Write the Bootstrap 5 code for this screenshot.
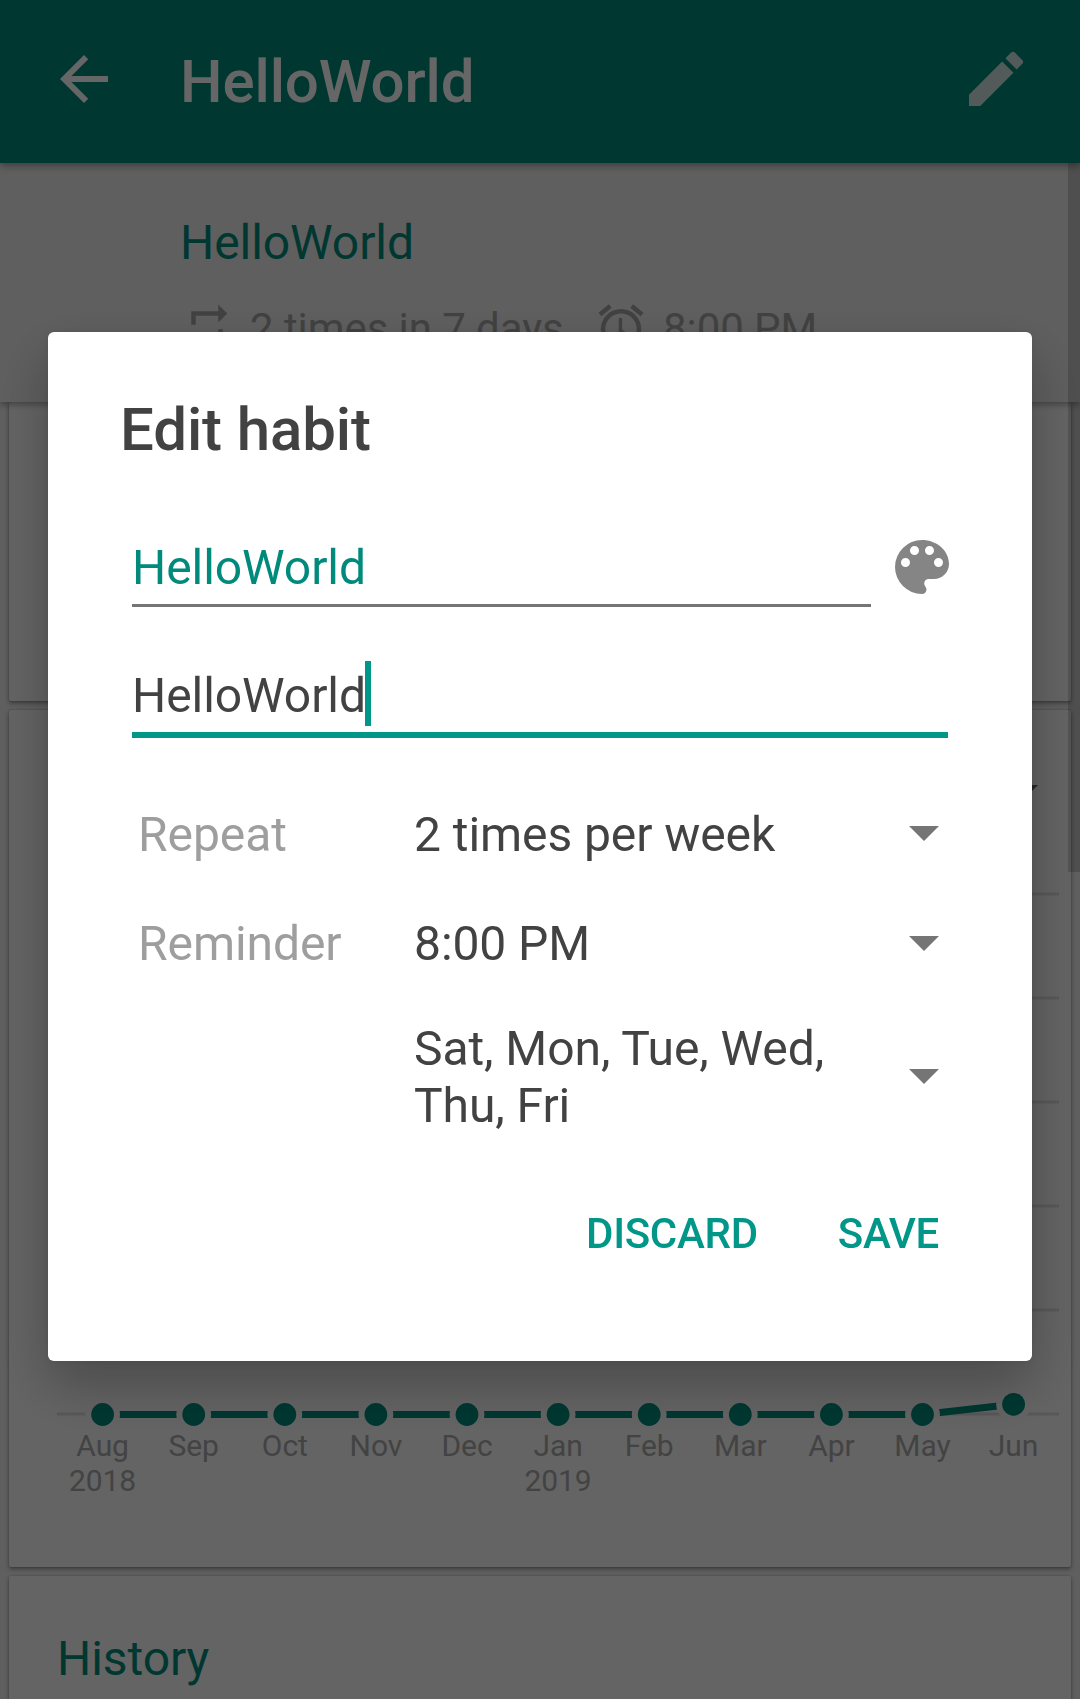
<!DOCTYPE html>
<html lang="en">
<head>
<meta charset="utf-8">
<meta name="viewport" content="width=device-width, initial-scale=1">
<title>Edit habit</title>
<link href="https://cdn.jsdelivr.net/npm/bootstrap@5.3.0/dist/css/bootstrap.min.css" rel="stylesheet">
<style>
  :root { --teal: #008a7b; --accent: #009688; --ink: #424242; }
  html, body { height: 1699px; overflow: hidden; }
  body { font-family: Roboto, "Liberation Sans", sans-serif; background: #ededed; color: var(--ink); font-size: 48px; line-height: 56px; letter-spacing: -.07px; }
  svg { display: block; flex: none; }
  .app-bar { height: 163px; padding: 43px 48px 0; background: var(--teal); color: #fff; position: relative; z-index: 3; box-shadow: 0 3px 7px rgba(0,0,0,.35); }
  .bar-title { font-size: 60px; line-height: 72px; font-weight: 500; margin: 3px 0 0 60px; letter-spacing: -.12px; }
  .habit-head { height: 239px; padding: 52px 0 0 180px; background: #ededed; position: relative; z-index: 2; box-shadow: 0 3px 6px rgba(0,0,0,.3); }
  .habit-name { color: var(--teal); }
  .habit-meta { width: 483px; font-size: 42px; line-height: 54px; color: #a4a4a4; margin-top: 29px; }
  .meta-text { padding-top: 2px; }
  .meta-time { margin-left: 15px; width: 0; white-space: nowrap; }
  .panel { background: #fafafa; border: 0; border-radius: 2px; margin: 0 9px 9px; box-shadow: 0 2px 4px rgba(0,0,0,.38), 0 0 2px rgba(0,0,0,.2); }
  .panel-overview { height: 299px; }
  .panel-score { height: 857px; }
  .panel-history { height: 170px; padding: 55px 48px; color: var(--teal); }
  .score-top { padding: 75px 33px 0 0; height: 170px; }
  .scroll-thumb { position: absolute; right: 0; top: 163px; width: 12px; height: 709px; background: rgba(0,0,0,.17); z-index: 2; }
  .chart-label { font-size: 30px; fill: #a8a8a8; text-anchor: middle; }
  .modal-backdrop { --bs-backdrop-opacity: .6; width: 100%; height: 1699px; }
  .modal-dialog { max-width: 984px; margin: 332px auto 0; }
  .modal-content { height: 1029px; border: 0; border-radius: 6px; background: #fff; color: var(--ink); padding: 62px 72px 0; box-shadow: 0 24px 54px rgba(0,0,0,.27), 0 0 8px rgba(0,0,0,.08); }
  .dialog-title { font-size: 60px; line-height: 72px; font-weight: 500; margin: 0 0 65px; letter-spacing: -.12px; }
  .field-row { margin: 0 2px 52px 12px; }
  .field { border-bottom: 3px solid #757575; padding: 9px 0 8px; }
  .name-field { width: 739px; margin-right: 15px; color: var(--teal); }
  .focus-field { width: 816px; margin-left: 12px; border-bottom: 6px solid var(--accent); margin-bottom: 69px; }
  .caret { width: 6px; height: 65px; background: var(--accent); margin: -7px 0 -2px -1px; }
  .opt { margin: 0 21px 0 18px; }
  .opt-label { width: 276px; color: #9e9e9e; }
  .opt-repeat { margin-bottom: 53px; }
  .opt-repeat svg { margin-top: -3px; }
  .opt-time { margin-bottom: 48px; }
  .opt-time svg, .opt-days svg { margin-top: -2px; }
  .opt-days { line-height: 57px; }
  .actions { margin: 75px 21px 0 0; gap: 80px; }
  .act { font-size: 42px; line-height: 50px; font-weight: 500; color: var(--accent); padding: 0; border: 0; border-radius: 0; letter-spacing: -.3px; }
</style>
</head>
<body>
<header class="app-bar d-flex align-items-start">
  <svg width="72" height="72" viewBox="0 0 24 24" fill="#fff"><path d="M20 11H7.83l5.59-5.59L12 4l-8 8 8 8 1.41-1.41L7.83 13H20v-2z"/></svg>
  <h1 class="bar-title">HelloWorld</h1>
  <svg class="ms-auto" width="72" height="72" viewBox="0 0 24 24" fill="#cce3e0"><path d="M3 17.25V21h3.75L17.81 9.94l-3.75-3.75L3 17.25zM20.71 7.04a1 1 0 0 0 0-1.41l-2.34-2.34a1 1 0 0 0-1.41 0l-1.83 1.83 3.75 3.75 1.83-1.83z"/></svg>
</header>

<section class="habit-head">
  <div class="habit-name">HelloWorld</div>
  <div class="habit-meta d-flex">
    <svg width="54" height="54" viewBox="0 0 24 24" fill="currentColor"><path d="M7 7h10v3l4-4-4-4v3H5v6h2V7zm10 10H7v-3l-4 4 4 4v-3h12v-6h-2v4z"/></svg>
    <span class="meta-text ms-3">2 times in 7 days</span>
    <svg class="ms-auto" width="54" height="54" viewBox="0 0 24 24" fill="currentColor"><path d="M22 5.72l-4.6-3.86-1.29 1.53 4.6 3.86L22 5.72zM7.88 3.39L6.6 1.86 2 5.71l1.29 1.53 4.59-3.85zM12.5 8H11v6l4.75 2.85.75-1.23-4-2.37V8zM12 4a9 9 0 1 0 0 18 9 9 0 0 0 0-18zm0 16a7 7 0 1 1 0-14 7 7 0 0 1 0 14z"/></svg>
    <span class="meta-text meta-time">8:00 PM</span>
  </div>
</section>

<main>
  <section class="card panel panel-overview"></section>
  <section class="card panel panel-score">
    <div class="score-top d-flex justify-content-end"><svg width="30" height="15" viewBox="0 0 30 15" fill="#606060"><path d="M0 0h30L15 15z"/></svg></div>
    <svg id="chart" width="1062" height="640" viewBox="9 880 1062 640"></svg>
  </section>
  <section class="card panel panel-history">History</section>
</main>
<div class="scroll-thumb"></div>

<div class="modal-backdrop show"></div>
<div class="modal d-block overflow-hidden" tabindex="-1" role="dialog">
  <div class="modal-dialog">
    <div class="modal-content">
      <h2 class="dialog-title">Edit habit</h2>
      <div class="field-row d-flex align-items-start">
        <div class="field name-field">HelloWorld</div>
        <svg width="72" height="72" viewBox="0 0 24 24" fill="#858585"><path d="M12 3a9 9 0 0 0 0 18c.83 0 1.5-.67 1.5-1.5 0-.39-.15-.74-.39-1.01-.23-.26-.38-.61-.38-.99 0-.83.67-1.5 1.5-1.5H16c2.76 0 5-2.24 5-5 0-4.42-4.03-8-9-8zm-5.5 9a1.5 1.5 0 1 1 0-3 1.5 1.5 0 0 1 0 3zm3-4a1.5 1.5 0 1 1 0-3 1.5 1.5 0 0 1 0 3zm5 0a1.5 1.5 0 1 1 0-3 1.5 1.5 0 0 1 0 3zm3 4a1.5 1.5 0 1 1 0-3 1.5 1.5 0 0 1 0 3z"/></svg>
      </div>
      <div class="field focus-field d-flex"><span>HelloWorld</span><span class="caret"></span></div>
      <div class="opt opt-repeat d-flex align-items-center">
        <span class="opt-label">Repeat</span><span class="flex-grow-1">2 times per week</span>
        <svg width="30" height="15" viewBox="0 0 30 15" fill="#757575"><path d="M0 0h30L15 15z"/></svg>
      </div>
      <div class="opt opt-time d-flex align-items-center">
        <span class="opt-label">Reminder</span><span class="flex-grow-1">8:00 PM</span>
        <svg width="30" height="15" viewBox="0 0 30 15" fill="#757575"><path d="M0 0h30L15 15z"/></svg>
      </div>
      <div class="opt opt-days d-flex align-items-center">
        <span class="opt-label"></span><span class="flex-grow-1">Sat, Mon, Tue, Wed,<br>Thu, Fri</span>
        <svg width="30" height="15" viewBox="0 0 30 15" fill="#757575"><path d="M0 0h30L15 15z"/></svg>
      </div>
      <div class="actions d-flex justify-content-end">
        <button type="button" class="btn act">DISCARD</button>
        <button type="button" class="btn act">SAVE</button>
      </div>
    </div>
  </div>
</div>

<script src="https://cdn.jsdelivr.net/npm/bootstrap@5.3.0/dist/js/bootstrap.bundle.min.js"></script>
<script>
  // Monthly score line: gridlines, then segments, then haloed points and labels
  const months = ['Aug', 'Sep', 'Oct', 'Nov', 'Dec', 'Jan', 'Feb', 'Mar', 'Apr', 'May', 'Jun'];
  const years = { 0: '2018', 5: '2019' };
  const px = i => 102.6 + i * 91.1, py = i => i === 10 ? 1404.3 : 1414.5;
  let s = '';
  for (let g = 0; g < 6; g++) s += `<rect x="57" y="${892.5 + g * 104}" width="1002" height="3" fill="#dcdcdc"/>`;
  for (let i = 0; i < 10; i++) s += `<line x1="${px(i)}" y1="${py(i)}" x2="${px(i + 1)}" y2="${py(i + 1)}" stroke="#008a7b" stroke-width="7"/>`;
  months.forEach((m, i) => {
    s += `<circle cx="${px(i)}" cy="${py(i)}" r="17.4" fill="#fafafa"/><circle cx="${px(i)}" cy="${py(i)}" r="11.4" fill="#008a7b"/>`;
    s += `<text class="chart-label" x="${px(i)}" y="1456">${m}</text>`;
    if (years[i]) s += `<text class="chart-label" x="${px(i)}" y="1491">${years[i]}</text>`;
  });
  document.getElementById('chart').innerHTML = s;
</script>
</body>
</html>
